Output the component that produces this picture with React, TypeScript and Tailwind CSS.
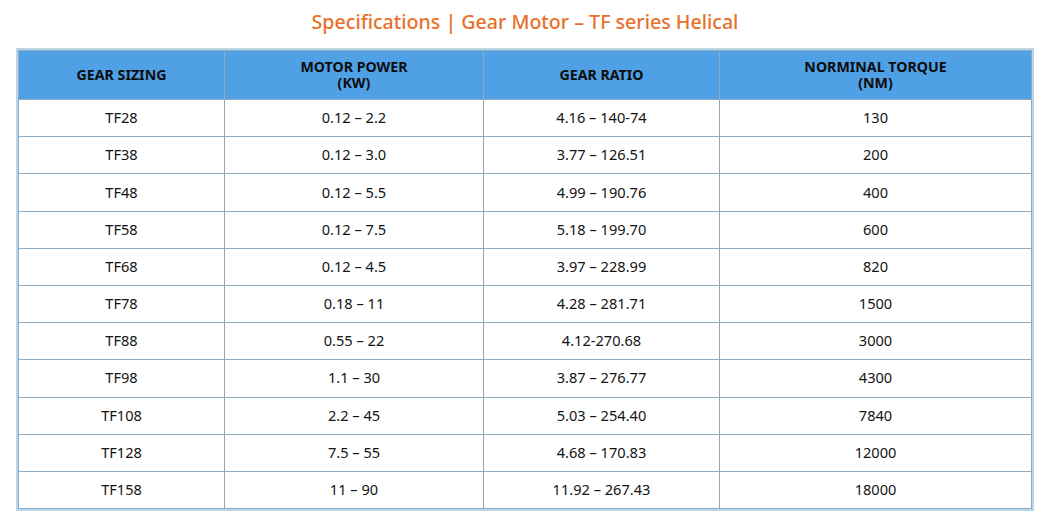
const rows = [
  ["TF28", "0.12 – 2.2", "4.16 – 140-74", "130"],
  ["TF38", "0.12 – 3.0", "3.77 – 126.51", "200"],
  ["TF48", "0.12 – 5.5", "4.99 – 190.76", "400"],
  ["TF58", "0.12 – 7.5", "5.18 – 199.70", "600"],
  ["TF68", "0.12 – 4.5", "3.97 – 228.99", "820"],
  ["TF78", "0.18 – 11", "4.28 – 281.71", "1500"],
  ["TF88", "0.55 – 22", "4.12-270.68", "3000"],
  ["TF98", "1.1 – 30", "3.87 – 276.77", "4300"],
  ["TF108", "2.2 – 45", "5.03 – 254.40", "7840"],
  ["TF128", "7.5 – 55", "4.68 – 170.83", "12000"],
  ["TF158", "11 – 90", "11.92 – 267.43", "18000"],
];

const App = () => {
  return (
    <div className="w-[1046px] h-[526px] bg-white pl-4 pr-3 pt-[9px] font-['Noto_Sans',sans-serif]">
      <h2 className="text-center text-[19.6px] font-medium text-[#e8702a] leading-[26px] mb-[13px]">
        Specifications | Gear Motor – TF series Helical
      </h2>
      <div className="border-2 border-[#bad7ea]">
        <table className="w-full border-collapse table-fixed text-[14.6px] text-[#141414]">
          <colgroup>
            <col className="w-[206px]" />
            <col className="w-[259px]" />
            <col className="w-[236px]" />
            <col />
          </colgroup>
          <thead>
            <tr className="bg-[#50a0e6] h-[49px]">
              <th className="border border-[#8fabc0] font-bold text-[14.2px] leading-[16px] text-[#0d0d0d]">GEAR SIZING</th>
              <th className="border border-[#8fabc0] font-bold text-[14.2px] leading-[16px] text-[#0d0d0d]">
                MOTOR POWER
                <br />
                (KW)
              </th>
              <th className="border border-[#8fabc0] font-bold text-[14.2px] leading-[16px] text-[#0d0d0d]">GEAR RATIO</th>
              <th className="border border-[#8fabc0] font-bold text-[14.2px] leading-[16px] text-[#0d0d0d]">
                NORMINAL TORQUE
                <br />
                (NM)
              </th>
            </tr>
          </thead>
          <tbody>
            {rows.map((r, i) => (
              <tr key={i} className="h-[37.2px]">
                {r.map((c, j) => (
                  <td key={j} className="border border-[#8fabc0] text-center">
                    {c}
                  </td>
                ))}
              </tr>
            ))}
          </tbody>
        </table>
      </div>
    </div>
  );
};

export default App;
